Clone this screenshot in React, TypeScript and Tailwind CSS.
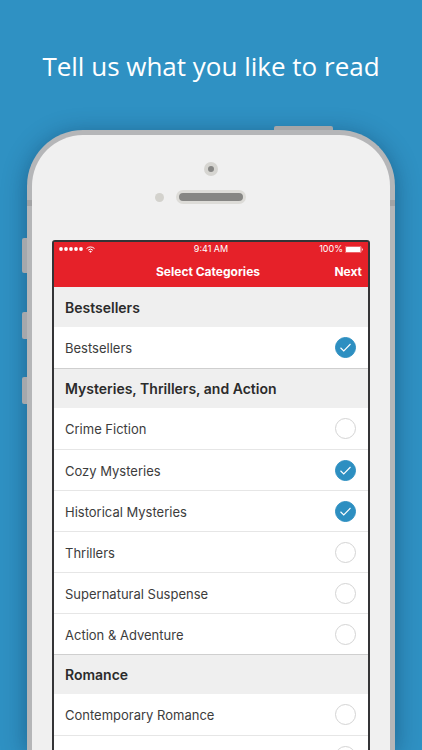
import { clsx } from "clsx";
import { useState } from "react";

interface Section {
	title: string;
	categories: string[];
}

const SECTIONS: Section[] = [
	{ title: "Bestsellers", categories: ["Bestsellers"] },
	{
		title: "Mysteries, Thrillers, and Action",
		categories: [
			"Crime Fiction",
			"Cozy Mysteries",
			"Historical Mysteries",
			"Thrillers",
			"Supernatural Suspense",
			"Action & Adventure",
		],
	},
	{
		title: "Romance",
		categories: ["Contemporary Romance", "Historical Romance"],
	},
];

function WifiIcon() {
	return (
		<svg viewBox="0 0 18 14" className="h-[7px] w-[9px]" aria-hidden="true">
			<g fill="none" stroke="currentColor" strokeWidth="2">
				<path d="M1 5.2a11.4 11.4 0 0 1 16 0" />
				<path d="M4.2 8.4a6.8 6.8 0 0 1 9.6 0" />
			</g>
			<path d="M9 13.6 6.3 10.8a3.8 3.8 0 0 1 5.4 0z" fill="currentColor" />
		</svg>
	);
}

function BatteryIcon() {
	return (
		<svg viewBox="0 0 36 14" className="h-[7px] w-[18px]" aria-hidden="true">
			<rect
				x="0.5"
				y="0.5"
				width="32"
				height="13"
				rx="2.5"
				fill="none"
				stroke="currentColor"
				strokeOpacity="0.8"
			/>
			<rect x="2" y="2" width="29" height="10" rx="1.2" fill="currentColor" />
			<path d="M34 4.6a2.6 2.6 0 0 1 0 4.8z" fill="currentColor" />
		</svg>
	);
}

function StatusBar() {
	return (
		<div className="grid h-[14px] grid-cols-[1fr_auto_1fr] items-center px-[5px] text-[9px]">
			<div className="flex items-center gap-[3px]">
				<svg viewBox="0 0 48 8" className="h-1 w-6" aria-hidden="true">
					<g fill="currentColor">
						<circle cx="4" cy="4" r="3.8" />
						<circle cx="14" cy="4" r="3.8" />
						<circle cx="24" cy="4" r="3.8" />
						<circle cx="34" cy="4" r="3.8" />
						<circle cx="44" cy="4" r="3.8" />
					</g>
				</svg>
				<WifiIcon />
			</div>
			<span className="text-center">9:41 AM</span>
			<div className="flex items-center justify-end gap-[2px]">
				<span>100%</span>
				<BatteryIcon />
			</div>
		</div>
	);
}

interface CategoryRowProps {
	name: string;
	divided: boolean;
	checked: boolean;
	onToggle: () => void;
}

function CategoryRow({ name, divided, checked, onToggle }: CategoryRowProps) {
	return (
		<li>
			<label
				className={clsx(
					"flex h-[41px] cursor-pointer items-center justify-between pr-3 pl-[11px]",
					divided && "border-t border-[#e6e6e6]",
				)}
			>
				<span className="pt-[2px] text-[13px] leading-none text-[#3c3c3c]">
					{name}
				</span>
				<span className="grid place-items-center">
					<input
						type="checkbox"
						checked={checked}
						onChange={onToggle}
						className="col-start-1 row-start-1 size-[21px] appearance-none rounded-full border border-[#d4d4d4] bg-white checked:border-[#2d8fc1] checked:bg-[#2d8fc1]"
					/>
					{checked && (
						<svg
							viewBox="0 0 22 18"
							className="pointer-events-none col-start-1 row-start-1 h-[9px] w-[11px]"
							fill="none"
							stroke="white"
							strokeWidth="2.2"
							aria-hidden="true"
						>
							<path d="M1 9.5 7.5 16 21 2" />
						</svg>
					)}
				</span>
			</label>
		</li>
	);
}

function PhoneTop() {
	return (
		<div className="flex flex-col items-center pt-[27px] pb-9">
			<div className="grid size-[14px] place-items-center rounded-full bg-[#d6d5d1]">
				<div className="size-[6px] rounded-full bg-[#868684]" />
			</div>
			<div className="mt-[14px] grid w-full grid-cols-[1fr_70px_1fr] items-center">
				<div className="mr-3 size-[9px] justify-self-end rounded-full bg-[#d3d2cd]" />
				<div className="h-[14px] rounded-full border-3 border-[#dddcd8] bg-[#868684]" />
			</div>
		</div>
	);
}

export default function App() {
	const [selected, setSelected] = useState<Set<string>>(
		new Set(["Bestsellers", "Cozy Mysteries", "Historical Mysteries"]),
	);

	const toggle = (name: string) => {
		setSelected((prev) => {
			const next = new Set(prev);
			if (next.has(name)) {
				next.delete(name);
			} else {
				next.add(name);
			}
			return next;
		});
	};

	return (
		<main className="flex h-screen flex-col overflow-hidden bg-[#2f91c3] font-['Inter',sans-serif]">
			<h1 className="pt-[46px] pb-[44px] text-center font-['Open_Sans',sans-serif] text-[26px] leading-10 text-white">
				Tell us what you like to read
			</h1>

			<div className="relative mx-[27px] min-h-0 flex-1 rounded-t-[56px] border-5 border-b-0 border-[#b5b6b8] bg-[#f0f0f0] shadow-[0_4px_24px_rgba(0,30,60,0.4)]">
				{/* hardware buttons and antenna bands on the casing */}
				<div className="absolute -top-[9px] right-[57px] h-1 w-[59px] rounded-t-xs bg-[#a5a6a8]" />
				<div className="absolute top-[103px] -left-[10px] h-[35px] w-[5px] rounded-l-xs bg-[#a5a8ac]" />
				<div className="absolute top-[177px] -left-[10px] h-[27px] w-[5px] rounded-l-xs bg-[#a5a8ac]" />
				<div className="absolute top-[242px] -left-[10px] h-[27px] w-[5px] rounded-l-xs bg-[#a5a8ac]" />
				<div className="absolute top-[65px] -left-[5px] h-[6px] w-[5px] bg-[#a2a3a5]" />
				<div className="absolute top-[65px] -right-[5px] h-[6px] w-[5px] bg-[#a2a3a5]" />

				<PhoneTop />

				<div className="mx-5 rounded-t-[3px] border-2 border-[#343436] bg-white">
					<header className="bg-[#e62129] text-white">
						<StatusBar />
						<div className="grid h-[31px] grid-cols-[1fr_auto_1fr] items-center pr-[6px] text-[12px] font-bold">
							<h2 className="col-start-2">Select Categories</h2>
							<button type="button" className="justify-self-end">
								Next
							</button>
						</div>
					</header>

					{SECTIONS.map((section, i) => (
						<section key={section.title}>
							<h3
								className={clsx(
									"flex h-10 items-center bg-[#efefef] pl-[11px] text-[14px] font-semibold text-[#2b2b2b]",
									i > 0 && "border-t border-[#cfcfcf]",
								)}
							>
								{section.title}
							</h3>
							<ul>
								{section.categories.map((name, j) => (
									<CategoryRow
										key={name}
										name={name}
										divided={j > 0}
										checked={selected.has(name)}
										onToggle={() => toggle(name)}
									/>
								))}
							</ul>
						</section>
					))}
				</div>
			</div>
		</main>
	);
}
